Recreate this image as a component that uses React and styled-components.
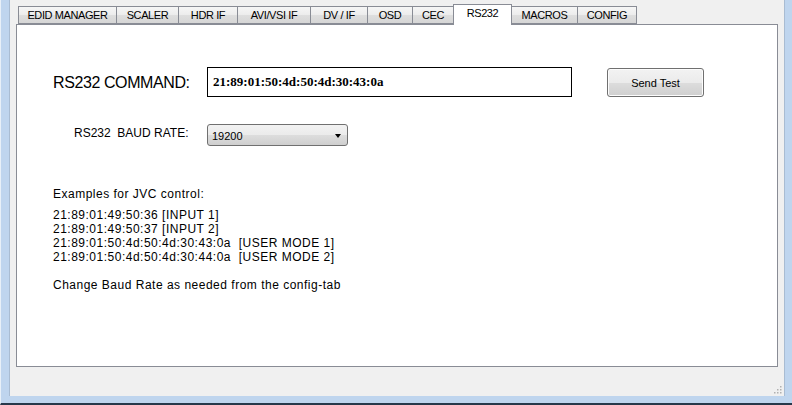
import React from "react";
import styled, { createGlobalStyle } from "styled-components";

const Global = createGlobalStyle`
  html, body { margin: 0; padding: 0; background: #bcd3ec; }
  body { font-family: "Liberation Sans", Arial, sans-serif; }
  * { box-sizing: border-box; }
`;

const Frame = styled.div`
  width: 792px;
  height: 405px;
  background: #bfd5ee;
  padding: 0 8px 7px 8px;
  border-bottom: 2px solid #27384a;
  border-left: 1px solid #e8f0f8;
  display: flex;
`;

const Client = styled.div`
  flex: 1;
  background: #f0f0f0;
  border-left: 1px solid #a9bcd2;
  border-right: 1px solid #a9bcd2;
  padding: 3px 6px 0 6px;
  display: flex;
  flex-direction: column;
  position: relative;
`;

const TabBar = styled.div`
  display: flex;
  align-items: flex-end;
  height: 21px;
  padding-left: 2px;
  position: relative;
  z-index: 1;
`;

const Tab = styled.div`
  width: ${(p) => p.$w}px;
  height: ${(p) => (p.$active ? 21 : 18)}px;
  margin-left: ${(p) => (p.$first ? 0 : -1)}px;
  margin-bottom: ${(p) => (p.$active ? -1 : 0)}px;
  border: 1px solid #898c95;
  border-bottom: ${(p) => (p.$active ? "none" : "1px solid #898c95")};
  background: ${(p) =>
    p.$active
      ? "#ffffff"
      : "linear-gradient(#f6f6f6 0%, #ececec 50%, #dedede 51%, #d6d6d6 100%)"};
  font-size: 11px;
  letter-spacing: -0.4px;
  color: #000;
  display: flex;
  justify-content: center;
  align-items: ${(p) => (p.$active ? "flex-start" : "center")};
  padding-top: ${(p) => (p.$active ? 2 : 0)}px;
  position: relative;
  z-index: ${(p) => (p.$active ? 2 : 1)};
  white-space: nowrap;
`;

const Panel = styled.div`
  width: 762px;
  height: 343px;
  background: #ffffff;
  border: 1px solid #898c95;
  padding: 42px 0 0 36px;
  display: flex;
  flex-direction: column;
`;

const CommandRow = styled.div`
  display: flex;
  align-items: center;
  height: 30px;
`;

const BigLabel = styled.div`
  font-size: 16px;
  letter-spacing: -0.4px;
  width: 154px;
  color: #000;
  padding-top: 1px;
`;

const CmdInput = styled.div`
  width: 365px;
  height: 30px;
  border: 1px solid #000;
  font-family: "Liberation Serif", "Times New Roman", serif;
  font-weight: bold;
  font-size: 13px;
  display: flex;
  align-items: center;
  padding-left: 5px;
  padding-bottom: 1px;
`;

const Button = styled.div`
  margin-left: 35px;
  width: 97px;
  height: 29px;
  margin-top: 1px;
  border: 1px solid #707070;
  border-radius: 3px;
  background: linear-gradient(#f2f2f2 0%, #ebebeb 50%, #dddddd 51%, #cfcfcf 100%);
  font-size: 11px;
  display: flex;
  align-items: center;
  justify-content: center;
  box-shadow: inset 0 0 0 1px #fcfcfc;
`;

const BaudRow = styled.div`
  display: flex;
  align-items: center;
  margin-top: 27px;
  height: 22px;
`;

const SmallLabel = styled.div`
  font-size: 12px;
  width: 154px;
  padding-left: 21px;
  padding-bottom: 5px;
  white-space: pre;
`;

const Select = styled.div`
  width: 141px;
  height: 22px;
  border: 1px solid #707070;
  border-radius: 3px;
  background: linear-gradient(#f2f2f2 0%, #ebebeb 50%, #dddddd 51%, #cfcfcf 100%);
  font-size: 11px;
  display: flex;
  align-items: center;
  justify-content: space-between;
  padding: 2px 5px 0 4px;
`;

const Arrow = styled.span`
  width: 0;
  height: 0;
  border-left: 3.5px solid transparent;
  border-right: 3.5px solid transparent;
  border-top: 4px solid #000;
  margin-right: 1px;
`;

const Info = styled.div`
  margin-top: 41px;
  font-size: 12px;
  letter-spacing: 0.5px;
  line-height: 14px;
  color: #000;
  white-space: pre;
`;

const InfoLine = styled.div`
  margin-top: ${(p) => p.$gap || 0}px;
`;

const Grip = styled.svg`
  position: absolute;
  right: 2px;
  bottom: 2px;
`;

const tabs = [
  ["EDID MANAGER", 99],
  ["SCALER", 63],
  ["HDR IF", 60],
  ["AVI/VSI IF", 74],
  ["DV / IF", 58],
  ["OSD", 46],
  ["CEC", 42],
  ["RS232", 59],
  ["MACROS", 67],
  ["CONFIG", 60],
];

export default function App() {
  return (
    <>
      <Global />
      <Frame>
        <Client>
          <TabBar>
            {tabs.map(([t, w], i) => (
              <Tab key={t} $w={w} $first={i === 0} $active={t === "RS232"}>
                {t}
              </Tab>
            ))}
          </TabBar>
          <Panel>
            <CommandRow>
              <BigLabel>RS232 COMMAND:</BigLabel>
              <CmdInput>21:89:01:50:4d:50:4d:30:43:0a</CmdInput>
              <Button>Send Test</Button>
            </CommandRow>
            <BaudRow>
              <SmallLabel>RS232  BAUD RATE:</SmallLabel>
              <Select>
                <span>19200</span>
                <Arrow />
              </Select>
            </BaudRow>
            <Info>
              <InfoLine>Examples for JVC control:</InfoLine>
              <InfoLine $gap={7}>21:89:01:49:50:36 [INPUT 1]</InfoLine>
              <InfoLine>21:89:01:49:50:37 [INPUT 2]</InfoLine>
              <InfoLine>21:89:01:50:4d:50:4d:30:43:0a  [USER MODE 1]</InfoLine>
              <InfoLine>21:89:01:50:4d:50:4d:30:44:0a  [USER MODE 2]</InfoLine>
              <InfoLine $gap={14}>Change Baud Rate as needed from the config-tab</InfoLine>
            </Info>
          </Panel>
          <Grip width="10" height="10" viewBox="0 0 10 10">
            {[[8, 2], [8, 5], [5, 5], [8, 8], [5, 8], [2, 8]].map(([x, y], i) => (
              <rect key={i} x={x} y={y} width="1.5" height="1.5" fill="#b0b0b0" />
            ))}
          </Grip>
        </Client>
      </Frame>
    </>
  );
}
